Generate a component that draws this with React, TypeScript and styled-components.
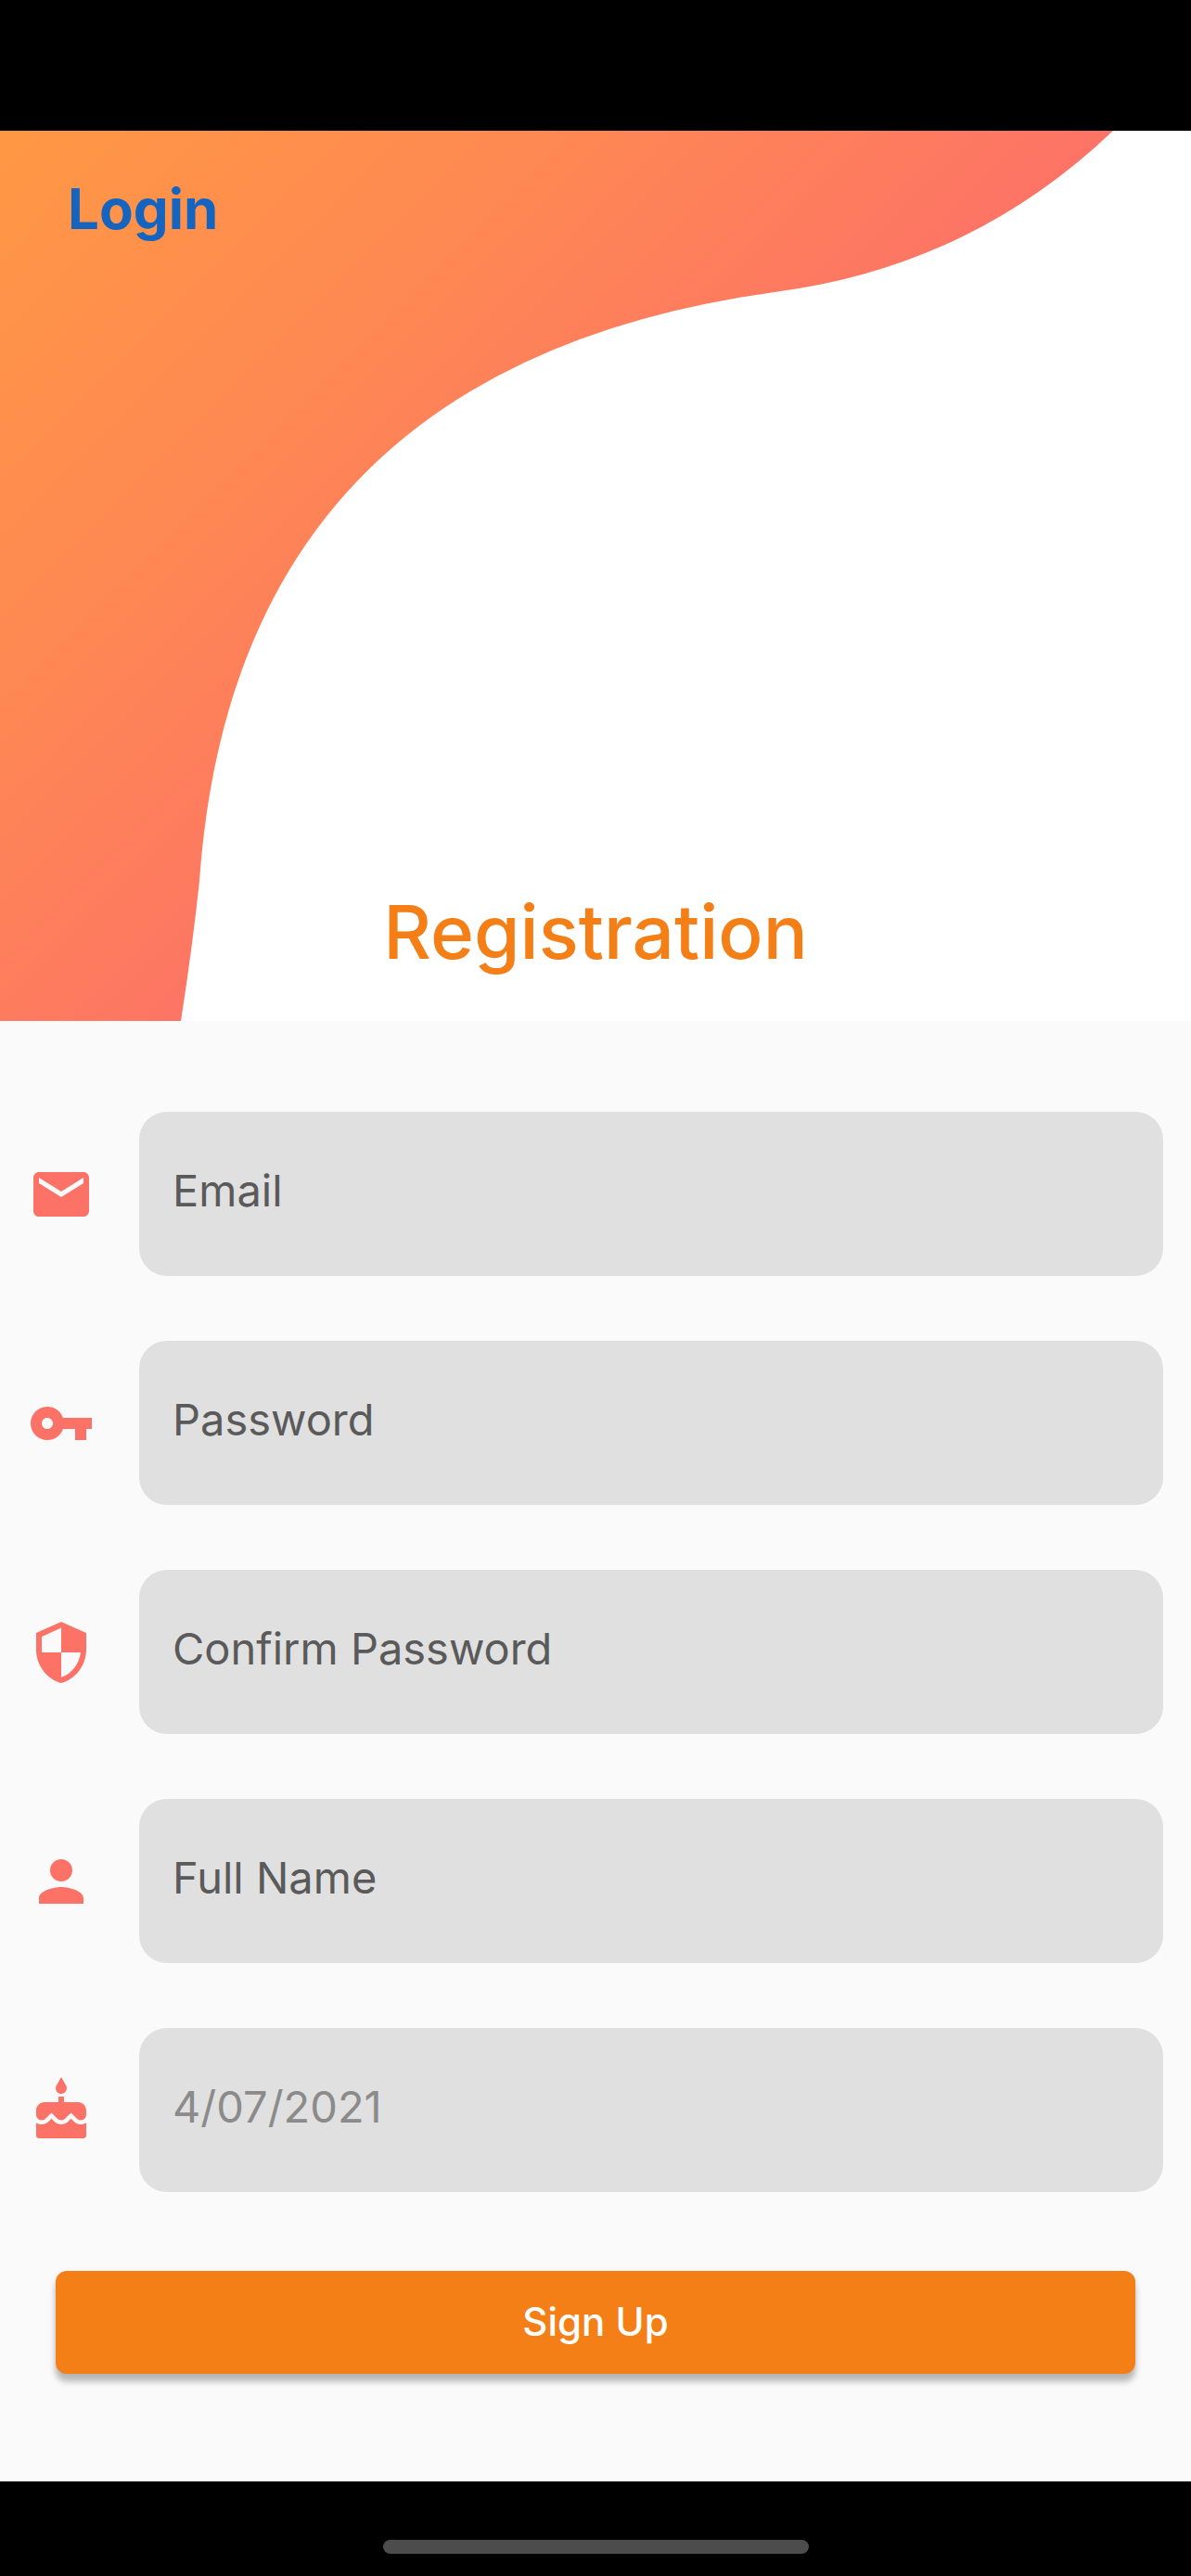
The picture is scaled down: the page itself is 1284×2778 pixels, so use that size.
import React from "react";
import styled, { createGlobalStyle } from "styled-components";
import type { IconType } from "react-icons";
import { MdCake, MdEmail, MdPerson, MdSecurity, MdVpnKey } from "react-icons/md";

const GlobalStyle = createGlobalStyle`
  *, *::before, *::after { box-sizing: border-box; }
  body {
    margin: 0;
    background: #000000;
    font-family: Inter, "Liberation Sans", sans-serif;
  }
`;

const Screen = styled.div`
  display: flex;
  flex-direction: column;
  min-height: 100vh;
`;

const StatusBar = styled.div`
  height: 141px;
  background: #000000;
`;

const Header = styled.header`
  display: grid;
  background: #ffffff;
`;

const Wave = styled.svg`
  grid-area: 1 / 1;
  display: block;
  width: 100%;
  height: auto;
`;

const HeaderContent = styled.div`
  grid-area: 1 / 1;
  display: flex;
  flex-direction: column;
  justify-content: space-between;
  align-items: flex-start;
  padding: 48px 73px;
`;

const LoginLink = styled.a`
  color: #1565c0;
  font-size: 60px;
  line-height: 72px;
  font-weight: 700;
  text-decoration: none;
`;

const Title = styled.h1`
  align-self: center;
  margin: 0;
  color: #f57f17;
  font-size: 80px;
  line-height: 96px;
  font-weight: 500;
`;

const Form = styled.form`
  flex: 1;
  display: flex;
  flex-direction: column;
  padding: 98px 0 0;
  background: #fafafa;
`;

const Fields = styled.div`
  display: flex;
  flex-direction: column;
  gap: 70px;
`;

const Row = styled.div`
  display: flex;
  align-items: center;
  gap: 48px;
  padding: 0 30px;
`;

const IconLabel = styled.label`
  display: flex;
  color: #fd7267;
  font-size: 72px;
`;

const TextField = styled.input<{ $hint?: boolean }>`
  flex: 1;
  min-width: 0;
  height: 177px;
  padding: 0 36px 8px;
  border: 0;
  border-radius: 30px;
  outline: 0;
  background: #e0e0e0;
  color: #212121;
  font-family: inherit;
  font-size: 47px;

  &::placeholder {
    color: ${(p) => (p.$hint ? "#8b8b8b" : "#5a5a5a")};
    opacity: 1;
  }
`;

const SubmitButton = styled.button`
  height: 111px;
  margin: 85px 60px 0;
  padding: 0 0 2px;
  border: 0;
  border-radius: 12px;
  background: #f57f17;
  box-shadow: 0 9px 6px rgba(0, 0, 0, 0.22), 0 3px 9px rgba(0, 0, 0, 0.1);
  color: #ffffff;
  font-family: inherit;
  font-size: 42px;
  font-weight: 500;
`;

const HomeBar = styled.footer`
  display: flex;
  justify-content: center;
  align-items: flex-end;
  height: 102px;
  padding-bottom: 24px;
  background: #000000;
`;

const HomeIndicator = styled.div`
  width: 459px;
  height: 15px;
  border-radius: 8px;
  background: #4c4c4c;
`;

interface Field {
  id: string;
  placeholder: string;
  type: string;
  icon: IconType;
  hint?: boolean;
}

const fields: Field[] = [
  { id: "email", placeholder: "Email", type: "email", icon: MdEmail },
  { id: "password", placeholder: "Password", type: "password", icon: MdVpnKey },
  { id: "confirm", placeholder: "Confirm Password", type: "password", icon: MdSecurity },
  { id: "name", placeholder: "Full Name", type: "text", icon: MdPerson },
  { id: "birthday", placeholder: "4/07/2021", type: "text", icon: MdCake, hint: true },
];

export default function App() {
  return (
    <>
      <GlobalStyle />
      <Screen>
        <StatusBar />
        <Header>
          <Wave viewBox="0 0 1284 960" aria-hidden="true">
            <defs>
              <linearGradient id="wave" gradientUnits="userSpaceOnUse" x1="0" y1="0" x2="620" y2="620">
                <stop offset="0" stopColor="#ff9844" />
                <stop offset="0.5" stopColor="#fe8853" />
                <stop offset="1" stopColor="#fd7267" />
              </linearGradient>
            </defs>
            <path
              fill="url(#wave)"
              d="M0 0H1200Q1046 147 835 174Q254 255 215 809Q207 884 195 960H0Z"
            />
          </Wave>
          <HeaderContent>
            <LoginLink href="#login">Login</LoginLink>
            <Title>Registration</Title>
          </HeaderContent>
        </Header>
        <Form onSubmit={(e) => e.preventDefault()}>
          <Fields>
            {fields.map(({ id, placeholder, type, icon: Icon, hint }) => (
              <Row key={id}>
                <IconLabel htmlFor={id} aria-label={placeholder}>
                  <Icon aria-hidden="true" />
                </IconLabel>
                <TextField
                  id={id}
                  type={type}
                  placeholder={placeholder}
                  aria-label={placeholder}
                  $hint={hint}
                />
              </Row>
            ))}
          </Fields>
          <SubmitButton type="submit">Sign Up</SubmitButton>
        </Form>
        <HomeBar>
          <HomeIndicator />
        </HomeBar>
      </Screen>
    </>
  );
}
